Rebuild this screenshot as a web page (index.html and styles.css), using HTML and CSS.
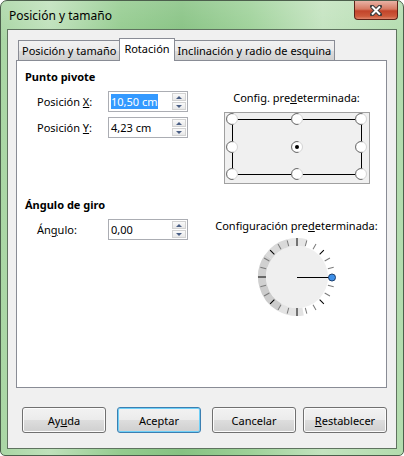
FILE: index.html
```html
<!DOCTYPE html>
<html lang="es">
<head>
  <meta charset="UTF-8">
  <title>Posición y tamaño</title>
  <link rel="stylesheet" href="styles.css">
</head>
<body>

<div class="window">
  <div class="titlebar">
    <span class="title">Posición y tamaño</span>
    <span class="close">
      <svg width="12" height="11" viewBox="0 0 12 11">
        <path d="M2 1.5 L10 9.5 M10 1.5 L2 9.5" stroke="#3b3b3b" stroke-width="4" stroke-linecap="round"/>
        <path d="M2 1.5 L10 9.5 M10 1.5 L2 9.5" stroke="#fff" stroke-width="2"/>
      </svg>
    </span>
  </div>

  <div class="client">
    <div class="tabs">
      <div class="tab">Posición y tamaño</div>
      <div class="tab active">Rotación</div>
      <div class="tab">Inclinación y radio de esquina</div>
    </div>

    <div class="panel">
      <!-- Punto pivote -->
      <section class="group">
        <div class="fields">
          <h3>Punto pivote</h3>
          <div class="row">
            <label>Posición <u>X</u>:</label>
            <div class="spin">
              <span class="value"><span class="sel">10,50 cm</span></span>
              <span class="arrows"><i class="up"></i><i class="down"></i></span>
            </div>
          </div>
          <div class="row">
            <label>Posición <u>Y</u>:</label>
            <div class="spin">
              <span class="value">4,23 cm</span>
              <span class="arrows"><i class="up"></i><i class="down"></i></span>
            </div>
          </div>
        </div>
        <div class="preset">
          <div class="caption">Config. pre<u>d</u>eterminada:</div>
          <svg class="points" width="146" height="72" viewBox="0 0 146 72">
            <defs>
              <g id="pt">
                <circle r="5.5" fill="#fff" stroke="#d4d4d4"/>
                <path d="M1.5 -5.3 A5.5 5.5 0 1 0 1.5 5.3" fill="none" stroke="#6e6e6e"/>
              </g>
            </defs>
            <rect x="0.5" y="0.5" width="145" height="71" fill="#f0f0f0" stroke="#a0a0a0"/>
            <path d="M8 7.5 H137.5 V62.5 H8.5 V7.5" fill="none" stroke="#000"/>
            <use href="#pt" x="8" y="7"/>
            <use href="#pt" x="73" y="7"/>
            <use href="#pt" x="137" y="7"/>
            <use href="#pt" x="8" y="35"/>
            <use href="#pt" x="73" y="35"/>
            <use href="#pt" x="137" y="35"/>
            <use href="#pt" x="8" y="62"/>
            <use href="#pt" x="73" y="62"/>
            <use href="#pt" x="137" y="62"/>
            <circle cx="73" cy="35" r="2" fill="#000"/>
          </svg>
        </div>
      </section>

      <!-- Ángulo de giro -->
      <section class="group angle">
        <div class="fields">
          <h3>Ángulo de giro</h3>
          <div class="row">
            <label>Án<u>g</u>ulo:</label>
            <div class="spin">
              <span class="value">0,00</span>
              <span class="arrows"><i class="up"></i><i class="down"></i></span>
            </div>
          </div>
        </div>
        <div class="preset">
          <div class="caption">Configuración pre<u>d</u>eterminada:</div>
          <svg class="dial" width="80" height="80" viewBox="0 0 80 80">
            <circle cx="40" cy="40" r="31" fill="#efefef"/>
            <!-- anillo sombreado de la mitad izquierda -->
            <g fill="none" stroke-width="8">
              <circle cx="40" cy="40" r="35" pathLength="360" stroke-dasharray="40 320" stroke="#e3e3e3" transform="rotate(80 40 40)"/>
              <circle cx="40" cy="40" r="35" pathLength="360" stroke-dasharray="45 315" stroke="#cccccc" transform="rotate(120 40 40)"/>
              <circle cx="40" cy="40" r="35" pathLength="360" stroke-dasharray="50 310" stroke="#d0d0d0" transform="rotate(165 40 40)"/>
              <circle cx="40" cy="40" r="35" pathLength="360" stroke-dasharray="40 320" stroke="#d9d9d9" transform="rotate(215 40 40)"/>
              <circle cx="40" cy="40" r="35" pathLength="360" stroke-dasharray="30 330" stroke="#e6e6e6" transform="rotate(255 40 40)"/>
            </g>
            <g stroke="#7a7a7a" stroke-width="1">
              <line x1="72" y1="40" x2="78" y2="40" transform="rotate(15 40 40)"/>
              <line x1="72" y1="40" x2="78" y2="40" transform="rotate(30 40 40)"/>
              <line x1="72" y1="40" x2="78" y2="40" transform="rotate(60 40 40)"/>
              <line x1="72" y1="40" x2="78" y2="40" transform="rotate(75 40 40)"/>
              <line x1="72" y1="40" x2="78" y2="40" transform="rotate(105 40 40)"/>
              <line x1="72" y1="40" x2="78" y2="40" transform="rotate(120 40 40)"/>
              <line x1="72" y1="40" x2="78" y2="40" transform="rotate(150 40 40)"/>
              <line x1="72" y1="40" x2="78" y2="40" transform="rotate(165 40 40)"/>
              <line x1="72" y1="40" x2="78" y2="40" transform="rotate(195 40 40)"/>
              <line x1="72" y1="40" x2="78" y2="40" transform="rotate(210 40 40)"/>
              <line x1="72" y1="40" x2="78" y2="40" transform="rotate(240 40 40)"/>
              <line x1="72" y1="40" x2="78" y2="40" transform="rotate(255 40 40)"/>
              <line x1="72" y1="40" x2="78" y2="40" transform="rotate(285 40 40)"/>
              <line x1="72" y1="40" x2="78" y2="40" transform="rotate(300 40 40)"/>
              <line x1="72" y1="40" x2="78" y2="40" transform="rotate(330 40 40)"/>
              <line x1="72" y1="40" x2="78" y2="40" transform="rotate(345 40 40)"/>
            </g>
            <g stroke="#000" stroke-width="1">
              <line x1="72" y1="40" x2="78" y2="40" transform="rotate(45 40 40)"/>
              <line x1="72" y1="40" x2="78" y2="40" transform="rotate(135 40 40)"/>
              <line x1="72" y1="40" x2="78" y2="40" transform="rotate(225 40 40)"/>
              <line x1="72" y1="40" x2="78" y2="40" transform="rotate(315 40 40)"/>
              <line x1="71" y1="40" x2="79" y2="40" transform="rotate(90 40 40)"/>
              <line x1="71" y1="40" x2="79" y2="40" transform="rotate(180 40 40)"/>
              <line x1="71" y1="40" x2="79" y2="40" transform="rotate(270 40 40)"/>
            </g>
            <line x1="40" y1="40.5" x2="75" y2="40.5" stroke="#000" stroke-width="1.2"/>
            <circle cx="75" cy="40.5" r="3.5" fill="#3d8fe8" stroke="#1c3f6e" stroke-width="1"/>
          </svg>
        </div>
      </section>
    </div>

    <div class="buttons">
      <button>Ay<u>u</u>da</button>
      <button class="default">Aceptar</button>
      <button>Cancelar</button>
      <button><u>R</u>establecer</button>
    </div>
  </div>
</div>

</body>
</html>
```

FILE: styles.css
```css
/* Ventana de diálogo estilo Aero */
body {
  margin: 0;
  background: #fff;
  font-family: "Noto Sans", sans-serif;
  font-size: 11px;
  color: #000;
}
.window {
  width: 404px;
  height: 456px;
  box-sizing: border-box;
  border: 1px solid #4c5f4c;
  border-radius: 7px 7px 5px 5px;
  padding: 0 6px 6px 6px;
  background:
    linear-gradient(180deg, rgba(255,255,255,0.15), rgba(255,255,255,0) 40px),
    linear-gradient(90deg, #a9d6a4 0%, #bfe1bb 12%, #93cb8e 30%, #86c282 45%, #9dd198 62%, #c3e3bf 80%, #b3dcae 100%);
}
.titlebar {
  height: 28px;
  display: flex;
  justify-content: space-between;
  align-items: flex-start;
}
.title {
  padding: 7px 0 0 2px;
  font-size: 12px;
  line-height: 16px;
}
.close {
  width: 44px;
  height: 19px;
  margin-right: -1px;
  box-sizing: border-box;
  border: 1px solid #5c2318;
  border-top: none;
  border-radius: 0 0 4px 4px;
  background: linear-gradient(180deg, #e8b2a5 0%, #d67a63 45%, #c2442a 55%, #cd5a3b 85%, #e0876c 100%);
  display: flex;
  align-items: center;
  justify-content: center;
}

/* Área cliente */
.client {
  height: 420px;
  box-sizing: border-box;
  border: 1px solid #5f735f;
  background: #f0f0f0;
  padding-top: 8px;
}
.tabs {
  display: flex;
  align-items: flex-end;
  padding-left: 10px;
  position: relative;
  z-index: 1;
}
.tab {
  height: 19px;
  padding: 0 3px;
  border: 1px solid #898c95;
  border-bottom: none;
  border-right: none;
  background: linear-gradient(180deg, #f2f2f2 0%, #ebebeb 50%, #dddddd 51%, #cfcfcf 100%);
  line-height: 19px;
  white-space: nowrap;
}
.tab:last-child {
  border-right: 1px solid #898c95;
}
.tab.active {
  height: 22px;
  margin-bottom: -1px;
  padding: 0 4px;
  border-right: 1px solid #898c95;
  background: #fff;
  line-height: 19px;
}
.tab.active + .tab {
  border-left: none;
}
.panel {
  margin: 0 9px 0 8px;
  height: 328px;
  box-sizing: border-box;
  border: 1px solid #898c95;
  background: #fff;
  padding-top: 8px;
}

/* Grupos del panel */
.group {
  display: flex;
}
.group.angle {
  margin-top: 13px;
}
.fields {
  width: 190px;
  padding-left: 8px;
  box-sizing: border-box;
}
h3 {
  margin: 0 0 6px 0;
  font-size: 11px;
  font-weight: bold;
  line-height: 16px;
}
.row {
  display: flex;
  align-items: center;
  padding-left: 12px;
  margin-bottom: 5px;
}
.row label {
  width: 71px;
}
.spin {
  width: 80px;
  height: 21px;
  box-sizing: border-box;
  border: 1px solid #abadb3;
  display: flex;
  align-items: center;
  justify-content: space-between;
  padding: 0 1px 0 2px;
}
.value {
  line-height: 15px;
}
.sel {
  background: #3399ff;
  color: #fff;
}
.arrows {
  width: 14px;
  height: 17px;
  display: flex;
  flex-direction: column;
  gap: 1px;
}
.arrows i {
  flex: 1;
  border: 1px solid #d2d2d2;
  background: linear-gradient(180deg, #fafafa, #e8e8e8);
  position: relative;
}
.arrows i::after {
  content: "";
  position: absolute;
  left: 3px;
  top: 2px;
  border-left: 3.5px solid transparent;
  border-right: 3.5px solid transparent;
}
.arrows .up::after {
  border-bottom: 3px solid #4a5f85;
}
.arrows .down::after {
  border-top: 3px solid #4a5f85;
}
.preset {
  flex: 1;
  display: flex;
  flex-direction: column;
  align-items: center;
  padding-top: 21px;
}
.caption {
  line-height: 16px;
  margin-bottom: 6px;
}
.angle .caption {
  margin-bottom: 3px;
}
.points,
.dial {
  display: block;
}

/* Botones */
.buttons {
  display: flex;
  gap: 7px;
  padding-left: 14px;
  margin-top: 19px;
}
button {
  width: 84px;
  height: 26px;
  font: inherit;
  color: #000;
  border: 1px solid #707070;
  border-radius: 3px;
  background: linear-gradient(180deg, #f2f2f2 0%, #ebebeb 50%, #dddddd 51%, #cfcfcf 100%);
  box-shadow: inset 0 0 0 1px #fcfcfc;
  padding: 0;
}
button.default {
  margin: 0 4px;
  border-color: #3c7fb1;
  box-shadow: inset 0 0 0 1px #6fd0f8;
}
```
